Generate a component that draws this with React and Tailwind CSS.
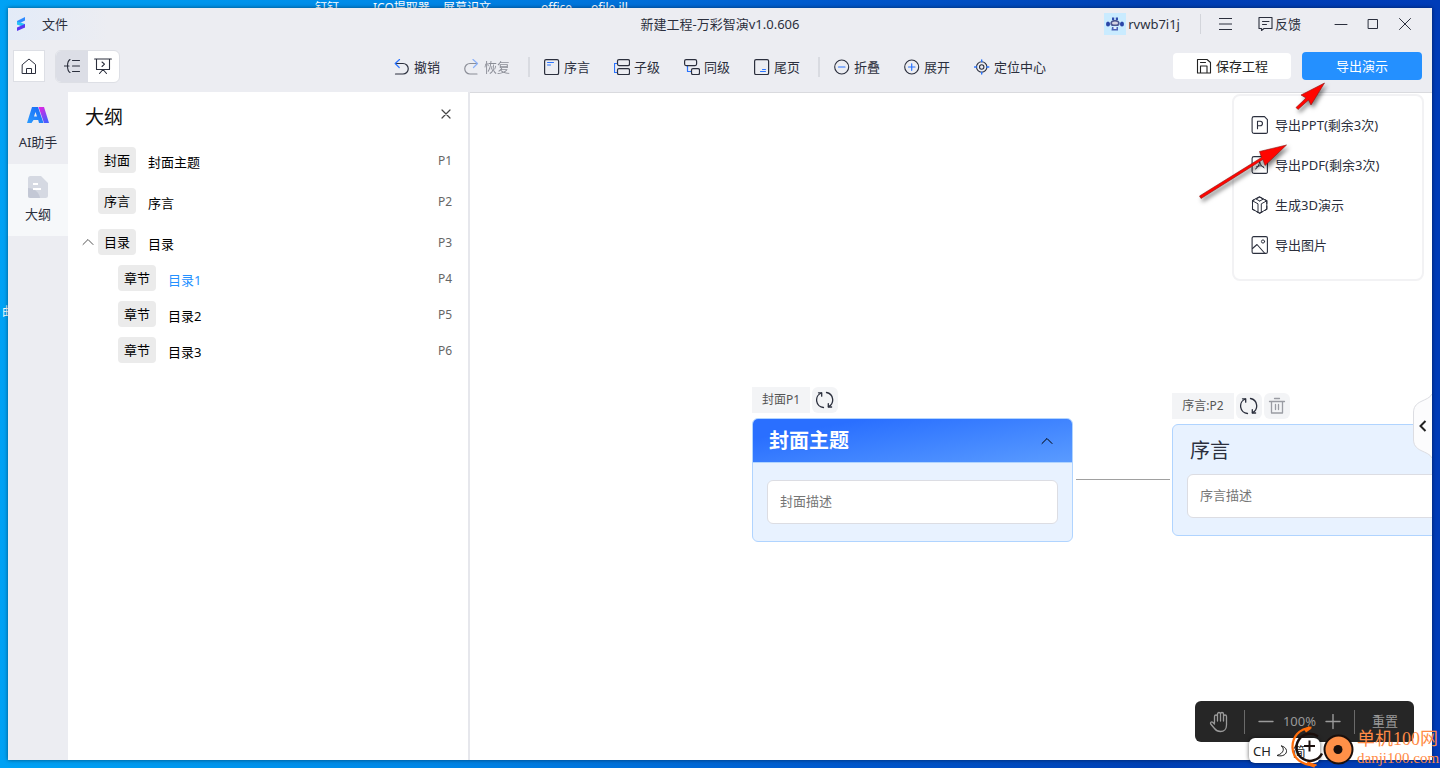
import { useState } from 'react'

const outline = [
  { tag: '封面', title: '封面主题', page: 'P1' },
  { tag: '序言', title: '序言', page: 'P2' },
  {
    tag: '目录',
    title: '目录',
    page: 'P3',
    children: [
      { tag: '章节', title: '目录1', page: 'P4' },
      { tag: '章节', title: '目录2', page: 'P5' },
      { tag: '章节', title: '目录3', page: 'P6' },
    ],
  },
]

function Icon({ size = 16, className = '', children }) {
  return (
    <svg
      width={size}
      height={size}
      viewBox={`0 0 ${size} ${size}`}
      fill="none"
      stroke="currentColor"
      strokeLinecap="round"
      strokeLinejoin="round"
      className={`shrink-0 ${className}`}
      aria-hidden="true"
    >
      {children}
    </svg>
  )
}

const BLUE = '#2a74ff'

const icons = {
  undo: (
    <Icon>
      <path d="M1.500 4.500h7.500a5 5 0 0 1 0 10.500H1.500" strokeWidth="1.200" />
      <path d="M5.500 .5 1.200 4.500l4 4" stroke={BLUE} strokeWidth="1.200" />
    </Icon>
  ),
  redo: (
    <Icon>
      <path d="M13 4.500H6a5 5 0 0 0 0 10.500h7" strokeWidth="1.200" />
      <path d="M9 .5 13.500 4.500l-4 4" stroke={BLUE} strokeWidth="1.200" />
    </Icon>
  ),
  preface: (
    <Icon>
      <rect x=".6" y=".6" width="14" height="15" rx="1.500" strokeWidth="1.200" />
      <path d="M3.500 3.500h6M3.500 6h3" stroke={BLUE} />
    </Icon>
  ),
  child: (
    <Icon>
      <path d="M3.500 4.500h-3v9h3" stroke={BLUE} strokeWidth="1.200" />
      <rect x="3.500" y=".6" width="12" height="6" rx="1.500" strokeWidth="1.200" />
      <rect x="3.500" y="9.600" width="12" height="6" rx="1.500" strokeWidth="1.200" />
    </Icon>
  ),
  sibling: (
    <Icon>
      <path d="M3.500 7v5.500h4" stroke={BLUE} strokeWidth="1.200" />
      <rect x=".6" y=".6" width="12" height="6" rx="1.500" strokeWidth="1.200" />
      <rect x="7.500" y="9.600" width="8" height="6" rx="1.500" strokeWidth="1.200" />
    </Icon>
  ),
  ending: (
    <Icon>
      <rect x=".6" y=".6" width="14" height="15" rx="1.500" strokeWidth="1.200" />
      <path d="M6.500 12.500h5M8.500 10.500h3" stroke={BLUE} />
    </Icon>
  ),
  collapse: (
    <Icon>
      <circle cx="7.700" cy="8" r="7" strokeWidth="1.100" />
      <path d="M4.500 8h6.500" stroke={BLUE} strokeWidth="1.200" />
    </Icon>
  ),
  expand: (
    <Icon>
      <circle cx="7.700" cy="8" r="7" strokeWidth="1.100" />
      <path d="M4.500 8h6.500M7.700 4.800v6.500" stroke={BLUE} strokeWidth="1.200" />
    </Icon>
  ),
  locate: (
    <Icon>
      <circle cx="7.700" cy="8" r="5.200" strokeWidth="1.100" />
      <circle cx="7.700" cy="8" r="2.200" strokeWidth="1.100" />
      <path d="M7.700 1v1.800M7.700 13.200V15M.6 8h1.900M12.900 8h1.900" stroke={BLUE} strokeWidth="1.400" />
    </Icon>
  ),
  save: (
    <Icon>
      <path d="M1.500 1.500h9.500l3.500 3v10.500h-13z" strokeWidth="1.100" />
      <path d="M4.500 4.500h5M4.500 14.500V8h6.500v6.500" strokeWidth="1.100" />
    </Icon>
  ),
  ppt: (
    <Icon size={18}>
      <path d="M3 .6h10.500l2.900 3V15.500a1.500 1.500 0 0 1-1.500 1.900H3a1.900 1.900 0 0 1-1.900-1.900V2.500A1.900 1.900 0 0 1 3 .6z" strokeWidth="1.100" />
      <path d="M6.500 12.800V5.200h2.700a2.200 2.200 0 0 1 0 4.500H6.500" strokeWidth="1.100" />
    </Icon>
  ),
  pdf: (
    <Icon size={18}>
      <path d="M3 .6h10.500l2.900 3V15.500a1.500 1.500 0 0 1-1.500 1.900H3a1.900 1.900 0 0 1-1.900-1.900V2.500A1.900 1.900 0 0 1 3 .6z" strokeWidth="1.100" />
      <path d="M4.500 13c2.500-1.500 4-4 4.300-8.500M5.500 10.800c3-1.500 5.500-1.500 7.500.7M8.800 6c.6 3 2 4.500 4 5.500" />
    </Icon>
  ),
  cube: (
    <Icon size={18}>
      <path d="M8.700 1 11.500 2.500M5.800 2.500 8.700 1M14 3.800l1.800 1v2.700M15.800 10v3.200l-2 1.200M11.300 15.800 8.700 17.200 6 15.800M3.500 14.400l-2-1.200V10M1.500 7.500V4.800l1.800-1" strokeWidth="1.100" />
      <path d="M8.700 1 15.800 4.800v8.400L8.700 17.200 1.500 13.200V4.800zM1.500 4.800 7 7.800v8.500M15.800 4.800l-5.500 3v8.500M5 3l3.700 2L12.500 3M8.700 5v0" />
    </Icon>
  ),
  image: (
    <Icon size={18}>
      <rect x="1.100" y=".6" width="15.300" height="16.800" rx="1.500" strokeWidth="1.100" />
      <circle cx="12" cy="5.500" r="1.600" />
      <path d="M1.500 12.500 6 8.500l7.500 8.500" strokeWidth="1.100" />
    </Icon>
  ),
}

const toolGroups = [
  [
    { icon: 'undo', label: '撤销' },
    { icon: 'redo', label: '恢复', disabled: true },
  ],
  [
    { icon: 'preface', label: '序言' },
    { icon: 'child', label: '子级' },
    { icon: 'sibling', label: '同级' },
    { icon: 'ending', label: '尾页' },
  ],
  [
    { icon: 'collapse', label: '折叠' },
    { icon: 'expand', label: '展开' },
    { icon: 'locate', label: '定位中心' },
  ],
]

const exportItems = [
  { icon: 'ppt', label: '导出PPT(剩余3次)' },
  { icon: 'pdf', label: '导出PDF(剩余3次)' },
  { icon: 'cube', label: '生成3D演示' },
  { icon: 'image', label: '导出图片' },
]

function TitleBar() {
  return (
    <header className="grid h-8 shrink-0 grid-cols-[1fr_auto_1fr] items-center">
      <div className="flex h-full items-center">
        <div className="flex h-full w-[100px] items-center gap-[15px] bg-linear-to-r from-[#e3ebf8] to-[#ecedf2] pl-2">
          <svg width="11" height="16" viewBox="0 0 11 16" aria-hidden="true">
            <path d="M1 5 9 1v3.500L4 7 1 8.500z" fill="#2f8bff" />
            <path d="M1 5.500 9 8v3.500L1 8.500z" fill="#25c3f5" />
            <path d="M9 8v3.500L1 15v-3.500z" fill="#5a35f0" />
          </svg>
          <button type="button">文件</button>
        </div>
      </div>
      <h1>新建工程-万彩智演v1.0.606</h1>
      <div className="flex items-center justify-end pr-5">
        <svg width="22" height="22" viewBox="0 0 22 22" className="bg-[#c9ebff]" aria-hidden="true">
          <path d="M3 11h16" stroke="#8fa3d8" strokeWidth="2" />
          <ellipse cx="4" cy="11" rx="2" ry="2.500" fill="#2945a8" />
          <ellipse cx="18" cy="11" rx="2" ry="2.500" fill="#2945a8" />
          <path d="M6.500 9.500C7 7.500 9 7 11 7s4 .5 4.500 2.500L14.500 13h-7z" fill="#4a5590" />
          <ellipse cx="11" cy="10" rx="3" ry="1.600" fill="#d6d4e2" />
          <path d="M8 4.500h2.200V7H8zM11.800 4.500H14V7h-2.200z" fill="#2f4cae" />
          <path d="M8 14h6v3.500H7.500z" fill="#4a62b8" />
          <path d="M9.500 14h3v2h-3z" fill="#e8effa" />
        </svg>
        <span className="ml-[2px]">rvwb7i1j</span>
        <span className="ml-5 h-5 w-px bg-[#d3d5db]" />
        <button type="button" aria-label="菜单" className="ml-[18px]">
          <Icon>
            <path d="M0 2.500h13M0 8h13M0 13.500h13" strokeLinecap="butt" />
          </Icon>
        </button>
        <button type="button" className="ml-[23px] flex items-center gap-px">
          <Icon>
            <path d="M1 1.500h13v11H6l-2.500 2v-2H1z" strokeWidth="1.100" />
            <path d="M4.500 5.500h6.500M4.500 8.500h4" />
          </Icon>
          反馈
        </button>
        <button type="button" aria-label="最小化" className="ml-[33px]">
          <Icon size={14}>
            <path d="M1 7.500h12" />
          </Icon>
        </button>
        <button type="button" aria-label="最大化" className="ml-[18px]">
          <Icon size={14}>
            <rect x="2.500" y="2.500" width="9" height="9" />
          </Icon>
        </button>
        <button type="button" aria-label="关闭" className="ml-[18px]">
          <Icon size={14}>
            <path d="M1.500 1.500l11 11M12.500 1.500l-11 11" />
          </Icon>
        </button>
      </div>
    </header>
  )
}

function ExportMenu() {
  return (
    <div
      role="menu"
      className="absolute top-[42px] -right-[2px] z-20 flex h-[187px] w-[192px] flex-col rounded-lg border-2 border-[#f2f2f4] bg-white pt-[9px]"
    >
      {exportItems.map((item) => (
        <button
          key={item.label}
          type="button"
          role="menuitem"
          className="flex h-10 items-center gap-[6px] pl-[17px] text-left whitespace-nowrap"
        >
          {icons[item.icon]}
          {item.label}
        </button>
      ))}
    </div>
  )
}

function Toolbar() {
  const [open, setOpen] = useState(true)

  return (
    <div className="grid h-[52px] shrink-0 grid-cols-[1fr_auto_1fr] items-center">
      <div className="flex items-center gap-[10px] pl-[5px]">
        <button
          type="button"
          aria-label="首页"
          className="grid size-8 place-items-center border border-[#dddfe5] bg-white"
        >
          <Icon>
            <path d="M1.500 6.500 8 1l6.500 5.500v9h-13z" />
            <path d="M5.500 15.500v-5h5v5" />
          </Icon>
        </button>
        <div className="flex h-[33px] w-[65px] overflow-hidden rounded-md border border-[#dddfe5] bg-white">
          <button type="button" aria-label="大纲视图" className="grid flex-1 place-items-center bg-[#dcdee6]">
            <Icon>
              <path d="M0 8h5M6 1.500C3.500 3 3.500 6 3.500 8s0 5 2.500 6.500M8.500 2.500h7M8.500 8h7M8.500 13.500h7" strokeWidth="1.100" />
            </Icon>
          </button>
          <button type="button" aria-label="演示视图" className="grid flex-1 place-items-center">
            <Icon size={18}>
              <path d="M.6 2h16.800M2.500 2v10.500h13V2M9 12.500l-3.500 4M9 12.500l3.500 4" strokeWidth="1.100" />
              <path d="M8 5l2.500 2.200L8 9.500" strokeWidth="1.100" />
            </Icon>
          </button>
        </div>
      </div>

      <nav className="flex items-center pt-[2px]">
        {toolGroups.map((group, i) => (
          <div key={group[0].label} className="flex items-center">
            {i > 0 && <span className="mr-[14px] ml-[18px] h-5 w-[2px] bg-[#d9dbe1]" />}
            <div className="flex gap-6">
              {group.map((tool) => (
                <button
                  key={tool.label}
                  type="button"
                  disabled={tool.disabled}
                  className="flex items-center gap-1 disabled:opacity-50"
                >
                  {icons[tool.icon]}
                  {tool.label}
                </button>
              ))}
            </div>
          </div>
        ))}
      </nav>

      <div className="relative mr-[10px] flex items-center justify-end gap-[11px]">
        <button
          type="button"
          className="flex h-[26px] w-[118px] items-center justify-center gap-1 rounded-sm bg-white text-[#222]"
        >
          {icons.save}
          保存工程
        </button>
        <button
          type="button"
          onClick={() => setOpen(!open)}
          className="h-7 w-[120px] rounded-sm bg-[#2490ff] text-white"
        >
          导出演示
        </button>
        {open && <ExportMenu />}
      </div>
    </div>
  )
}

function SideTabs() {
  return (
    <aside className="w-[60px] shrink-0">
      <button type="button" className="flex h-[72px] w-full flex-col items-center pt-[14px]">
        <svg width="22" height="17" viewBox="0 0 22 17" aria-hidden="true">
          <defs>
            <linearGradient id="ai-blue" x1="0" y1="1" x2="1" y2="0">
              <stop offset="0" stopColor="#2b9cff" />
              <stop offset="1" stopColor="#1665f5" />
            </linearGradient>
            <linearGradient id="ai-pink" x1="0" y1="0" x2=".6" y2="1">
              <stop offset="0" stopColor="#f020e0" />
              <stop offset="1" stopColor="#4a5cff" />
            </linearGradient>
          </defs>
          <path d="M5 1h6l5.500 16H12l-.8-3H6.500L4.500 17H0zM8.500 6 7 10.500h3z" fill="url(#ai-blue)" fillRule="evenodd" />
          <path d="M11.500 1H17l5 16h-5z" fill="url(#ai-pink)" />
        </svg>
        <span className="mt-[9px]">AI助手</span>
      </button>
      <button type="button" className="flex h-[72px] w-full flex-col items-center bg-[#f6f8fa] pt-3">
        <svg width="20" height="22" viewBox="0 0 20 22" aria-hidden="true">
          <path d="M2.500 0H13l7 7v12.500a2.500 2.500 0 0 1-2.500 2.500h-15A2.500 2.500 0 0 1 0 19.500v-17A2.500 2.500 0 0 1 2.500 0z" fill="#d5d9e2" />
          <path d="M0 12c6 0 11 4 12 10H2.500A2.500 2.500 0 0 1 0 19.500z" fill="#c3c8d5" />
          <path d="M5 8h5M5 13h8" stroke="#fff" strokeWidth="2" />
        </svg>
        <span className="mt-[6px]">大纲</span>
      </button>
    </aside>
  )
}

function OutlineRow({ item, nested }) {
  return (
    <div className={`flex h-[26px] items-center pr-4 ${nested ? 'pl-[50px]' : 'pl-[14px]'}`}>
      {!nested && (
        <span className="w-4 text-[#555]">
          {item.children && (
            <button type="button" aria-label="收起" className="block">
              <Icon size={12}>
                <path d="M1 8.500 6 3.500l5 5" />
              </Icon>
            </button>
          )}
        </span>
      )}
      <span className="grid h-[26px] w-[38px] place-items-center rounded-sm bg-[#ebebeb] text-black">
        {item.tag}
      </span>
      <span className={`ml-3 pt-[3px] ${item.title === '目录1' ? 'text-[#2490ff]' : 'text-black'}`}>{item.title}</span>
      <span className="ml-auto pt-[2px] text-xs text-[#666]">{item.page}</span>
    </div>
  )
}

function OutlinePanel() {
  return (
    <section className="w-[402px] shrink-0 border-r-2 border-[#e6e7ec] bg-white">
      <div className="flex items-start justify-between px-4 pt-[9px]">
        <h2 className="pl-px text-[19px] leading-8 text-[#111]">大纲</h2>
        <button type="button" aria-label="关闭大纲" className="pt-[7px] text-[#444]">
          <Icon size={12}>
            <path d="M2 2l8 8M10 2l-8 8" strokeWidth="1.200" />
          </Icon>
        </button>
      </div>
      <ul className="mt-[14px] flex flex-col gap-[15px]">
        {outline.map((item) => (
          <li key={item.page}>
            <OutlineRow item={item} />
            {item.children && (
              <ul className="mt-[10px] flex flex-col gap-[10px]">
                {item.children.map((child) => (
                  <li key={child.page}>
                    <OutlineRow item={child} nested />
                  </li>
                ))}
              </ul>
            )}
          </li>
        ))}
      </ul>
    </section>
  )
}

function RefreshButton() {
  return (
    <button type="button" aria-label="换一换" className="grid size-[26px] place-items-center rounded-md bg-[#f3f4f6]">
      <Icon size={18}>
        <path d="M5.500 2A7.500 7.500 0 0 0 7.500 16.500M10.500 1.500A7.500 7.500 0 0 1 12.500 15.600" strokeWidth="1.300" />
        <path d="M2.500 1.800h3.200v3.400M15.600 16h-3.300v-3.400" strokeWidth="1.300" />
      </Icon>
    </button>
  )
}

function Canvas() {
  return (
    <main className="relative min-w-0 flex-1 overflow-hidden border-t border-[#d9dade] bg-white">
      <div className="absolute top-[294px] left-[282px] w-[321px]">
        <div className="flex gap-[2px]">
          <span className="grid h-[26px] w-[58px] place-items-center bg-[#f3f4f6] text-xs text-[#555]">封面P1</span>
          <RefreshButton />
        </div>
        <div className="mt-[5px] overflow-hidden rounded-md border border-[#b0d4ff] bg-[#e8f2ff]">
          <div className="flex h-11 items-center justify-between border-b border-[#b0d4ff] bg-linear-170 from-[#2a6fff] from-20% to-[#5a9bff] pr-[19px] pl-4">
            <h3 className="text-xl leading-8 font-bold text-white">封面主题</h3>
            <button type="button" aria-label="收起" className="text-black">
              <Icon size={12}>
                <path d="M1 8.500 6 3.500l5 5" />
              </Icon>
            </button>
          </div>
          <div className="px-[14px] pt-[17px] pb-[17px]">
            <input
              aria-label="封面描述"
              placeholder="封面描述"
              className="block h-11 w-full rounded-md border border-[#dcdde3] bg-white px-3 pb-[2px] placeholder:text-[#757575]"
            />
          </div>
        </div>
      </div>

      <div className="absolute top-[386px] left-[606px] h-px w-[94px] bg-[#a0a0a0]" />

      <div className="absolute top-[300px] left-[702px] w-[321px]">
        <div className="flex gap-[2px]">
          <span className="grid h-[26px] w-[62px] place-items-center bg-[#f3f4f6] text-xs text-[#555]">序言:P2</span>
          <RefreshButton />
          <button
            type="button"
            aria-label="删除"
            className="grid size-[26px] place-items-center rounded-md bg-[#f3f4f6] text-[#9a9ca3]"
          >
            <Icon size={18}>
              <path d="M1.500 4.500h15M6.500 1.500h5M3.500 4.500v11.500h11V4.500M7.500 7.500v5M10.500 7.500v5" strokeWidth="1.300" />
            </Icon>
          </button>
        </div>
        <div className="mt-[5px] rounded-md border border-[#b0d4ff] bg-[#e8f2ff] px-[14px] pt-[10px] pb-[17px]">
          <h3 className="px-[3px] text-xl leading-8">序言</h3>
          <input
            aria-label="序言描述"
            placeholder="序言描述"
            className="mt-[7px] block h-11 w-full rounded-md border border-[#dcdde3] bg-white px-3 pb-[2px] placeholder:text-[#757575]"
          />
        </div>
      </div>

      <button type="button" aria-label="展开侧栏" className="absolute top-[301px] right-0 text-[#222]">
        <svg width="19" height="64" viewBox="0 0 19 64" fill="none" aria-hidden="true">
          <path d="M19 0c-2 4-6 5-11 7.500C3 10 .5 13 .5 19v26c0 6 2.500 9 7.500 11.500 5 2.500 9 3.500 11 7.500" fill="#fcfcfd" stroke="#dcdde2" />
          <path d="M12.500 27l-5 5 5 5" stroke="currentColor" strokeWidth="2" />
        </svg>
      </button>

      <div className="absolute right-[18px] bottom-[18px] flex h-[41px] w-[219px] items-center rounded-md bg-[#262626] text-[#9a9a9a]">
        <button type="button" aria-label="拖动画布" className="ml-[14px]">
          <Icon size={22}>
            <path
              d="M5.500 12V5.500a1.500 1.500 0 0 1 3 0V10M8.500 10V3a1.500 1.500 0 0 1 3 0v7M11.500 10V3a1.500 1.500 0 0 1 3 0v7M14.500 10V5.500a1.500 1.500 0 0 1 3 0V14c0 4-2.500 6.500-6 6.500-3 0-4.500-1-6-3L1.700 13c-.8-1.400.8-2.600 2-1.700L5.500 13"
              strokeWidth="1.300"
            />
          </Icon>
        </button>
        <span className="ml-[13px] h-6 w-px bg-[#6a6a6a]" />
        <button type="button" aria-label="缩小" className="ml-[13px]">
          <Icon>
            <path d="M1 7.500h14" strokeWidth="1.400" />
          </Icon>
        </button>
        <span className="w-[51px] pb-px text-center">100%</span>
        <button type="button" aria-label="放大">
          <Icon>
            <path d="M1 7.500h14M8 .5v14" strokeWidth="1.400" />
          </Icon>
        </button>
        <span className="ml-[13px] h-6 w-px bg-[#6a6a6a]" />
        <button type="button" className="ml-[17px] pb-px">重置</button>
      </div>
    </main>
  )
}

function Arrows() {
  return (
    <svg
      width="140"
      height="126"
      viewBox="0 0 140 126"
      className="pointer-events-none absolute top-[78px] right-[106px] z-30 drop-shadow-[2px_3px_2px_rgba(0,0,0,0.5)]"
      aria-hidden="true"
    >
      <g fill="#ff0500" stroke="#8c1410" strokeWidth=".6" strokeLinejoin="round">
        <path d="M130.500 5 117 27l-2.500-5L104 31.500l-2-2 10-9.500-5-3z" />
        <path d="M92.500 67 71 87.500l-2-6L7 120.500l-1.500-2.500L67.500 79.500l-2-6z" />
      </g>
    </svg>
  )
}

function Watermark() {
  return (
    <div className="pointer-events-none absolute right-0 bottom-0 z-40 flex h-[42px] items-center">
      <svg width="66" height="42" viewBox="0 0 66 42" fill="none" aria-hidden="true">
        <path d="M21.500 1.500C9 2.500 2 11 2.500 22c.5 10 9 18 24 17" stroke="#ff6d0a" strokeWidth="2.200" />
        <path d="M20 1.500l-5 3.500M17 37l8 3" stroke="#ff6d0a" strokeWidth="3.500" />
        <path d="M28 10.500A13.500 13.500 0 1 0 32 27.500" stroke="#1a0f0c" strokeWidth="2.500" />
        <path d="M19.500 14.500v11M14 20h11" stroke="#1a0f0c" strokeWidth="2" />
        <circle cx="48.500" cy="23.500" r="14" fill="#ff9048" stroke="#1a0f0c" strokeWidth="2" />
        <circle cx="48" cy="23.500" r="4.500" fill="#1a0f0c" />
      </svg>
      <div className="w-[84px] pt-px pl-px text-[#ff8a45]">
        <p className="font-['Liberation_Serif','Noto_Sans_CJK_SC',serif] text-lg leading-5">单机100网</p>
        <p className="font-['Liberation_Serif',serif] text-[15px] leading-[18px]">danji100.com</p>
      </div>
    </div>
  )
}

export default function App() {
  return (
    <div className="relative flex h-screen overflow-hidden bg-[linear-gradient(90deg,#00a2f5_0%,#0098ee_12%,#0086e6_30%,#0058cc_58%,#0040b4_80%,#003cb8_100%)] p-2 font-['Noto_Sans','Noto_Sans_CJK_SC',sans-serif] text-[13px] leading-5 text-[#2b2f3d]">
      <div className="absolute top-0 left-[315px] flex text-xs text-white">
        <span className="w-[58px]">钉钉</span>
        <span className="w-[70px]">ICO提取器</span>
        <span className="w-[98px]">屏幕识文</span>
        <span className="w-[50px]">office</span>
        <span>ofile ill</span>
      </div>
      <span className="absolute top-[304px] left-[2px] text-xs text-white">曲</span>

      <div className="relative flex min-w-0 flex-1 flex-col bg-[#ecedf2] shadow-[0_0_4px_rgba(0,0,0,0.5)]">
        <TitleBar />
        <Toolbar />
        <div className="flex min-h-0 flex-1">
          <SideTabs />
          <OutlinePanel />
          <Canvas />
        </div>
      </div>

      <Arrows />

      <div className="absolute right-[120px] bottom-[5px] z-30 flex h-[25px] w-[71px] items-center gap-[5px] rounded-md bg-white pl-1 text-[#222] shadow-[0_0_4px_rgba(0,0,0,0.6)]">
        CH
        <Icon size={12}>
          <path d="M5.500 1c3 2 3 7-4.500 9.500C7 12 11 9 10.500 5.500 10 3 8 1.500 5.500 1z" />
        </Icon>
        简
      </div>
      <Watermark />
    </div>
  )
}
